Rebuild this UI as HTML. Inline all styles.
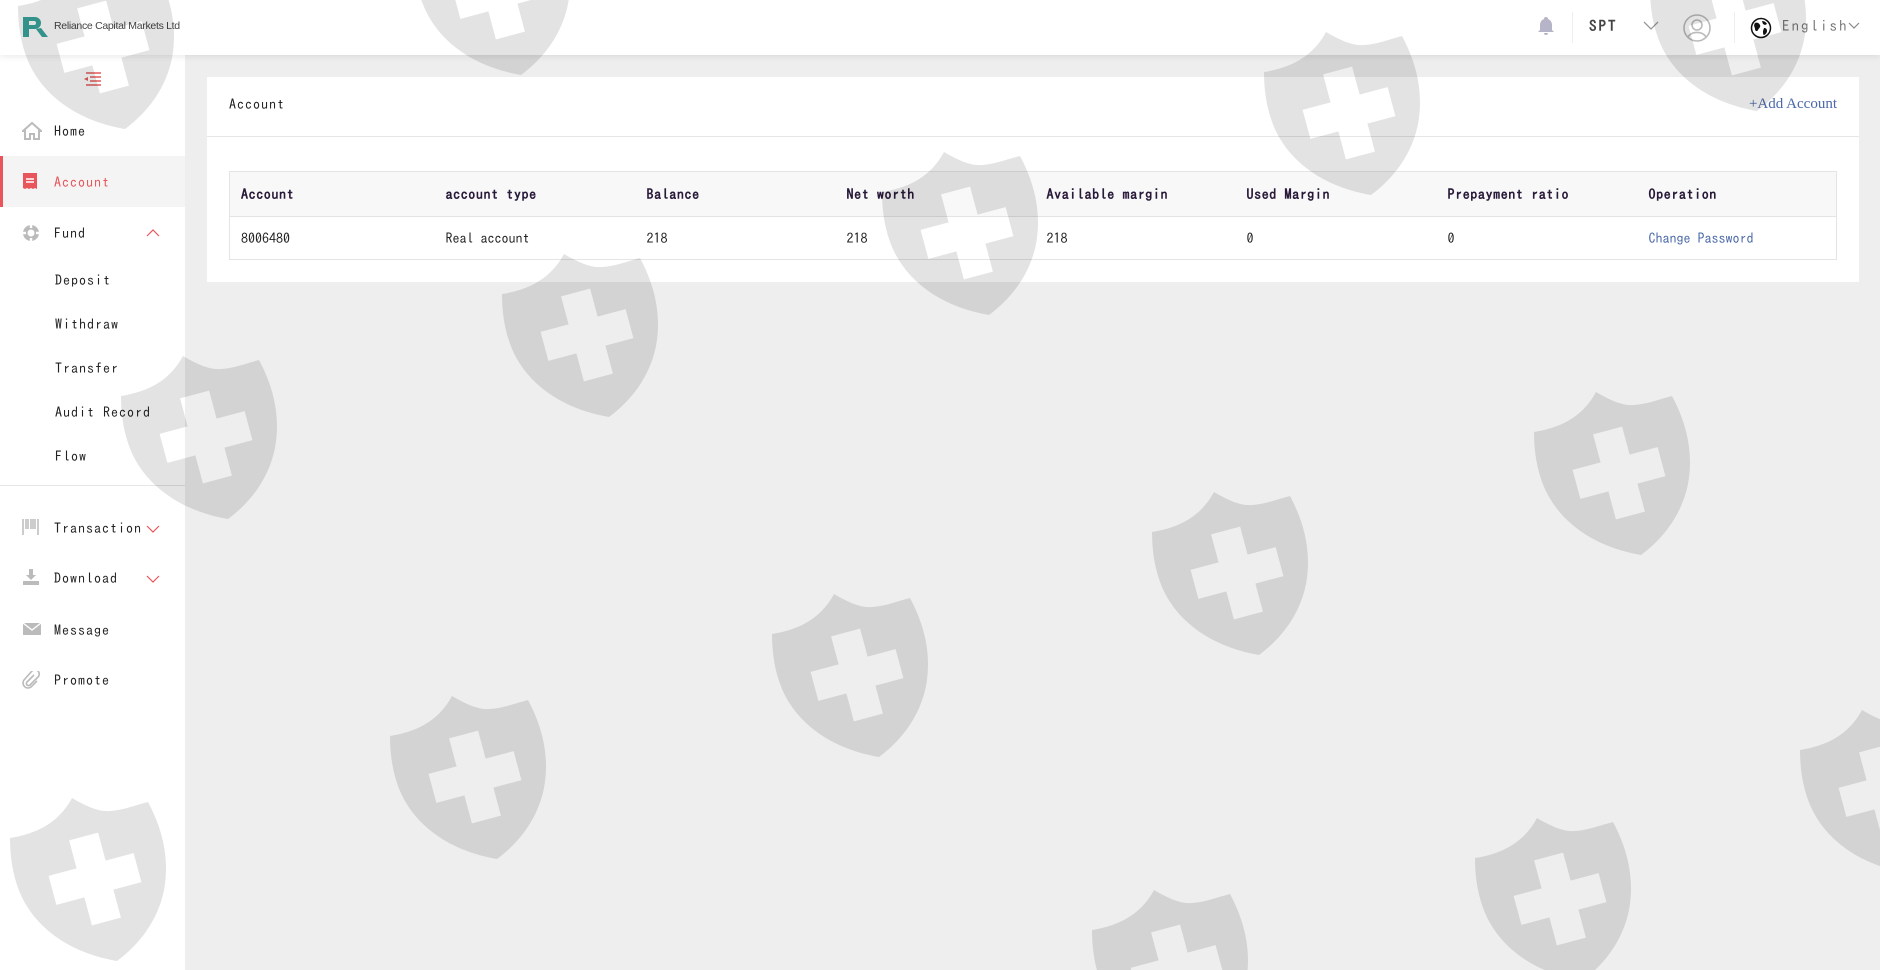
<!DOCTYPE html>
<html style="overflow:hidden;width:1880px;height:970px"><head><meta charset="utf-8"><style>
*{margin:0;padding:0;box-sizing:border-box}
body{width:1880px;height:970px;background:#eeeeee;font-family:"IPAGothic","Liberation Mono",monospace;font-size:14px;color:#222;position:relative;overflow:hidden}
.hdr{position:absolute;left:0;top:0;width:1880px;height:55px;background:#fff;box-shadow:0 2px 6px rgba(0,0,0,.08);z-index:2}
.side{position:absolute;left:0;top:55px;width:185px;height:915px;background:#fff;z-index:1}
.it{position:absolute;left:0;width:185px;height:20px;line-height:20px;letter-spacing:1px}
.it .t{position:absolute;left:54px}
.it svg{position:absolute;left:22px;top:1px}
.sub{position:absolute;left:55px;letter-spacing:1px;line-height:20px}
.card{position:absolute;left:207px;top:77px;width:1652px;height:205px;background:#fff}
.ch{height:60px;border-bottom:1px solid #e6e6e6;position:relative}
table{position:absolute;left:22px;top:94px;width:1608px;border-collapse:collapse;border:1px solid #e4e4e4}
th{background:#f8f8f8;height:45px;text-align:left;font-weight:bold;color:#2a1a3a;letter-spacing:.6px;padding-left:11px;border-bottom:1px solid #e4e4e4}
td{height:43px;padding-left:11px;font-size:14px}
.wm{position:absolute;left:0;top:0;z-index:5;pointer-events:none}
</style></head><body>
<div class="hdr">
 <svg style="position:absolute;left:22px;top:16px" width="30" height="22" viewBox="0 0 30 22"><path d="M1 1h12a6 6 0 0 1 0 12h-6v8H1z M7 5v4h5a2 2 0 0 0 0-4z" fill="#3aa59a" fill-rule="evenodd"/><path d="M14 13l6 8h6l-7-9z" fill="#3aa59a"/></svg>
 <div style="position:absolute;left:54px;top:20px;font-family:'Liberation Sans',sans-serif;font-size:10.5px;color:#444;letter-spacing:-.3px">Reliance Capital Markets Ltd</div>
 <svg style="position:absolute;left:1537px;top:16px" width="18" height="20" viewBox="0 0 18 20"><path d="M9 1a2 2 0 0 1 2 2 6 6 0 0 1 4 6v5l2 2H1l2-2V9a6 6 0 0 1 4-6 2 2 0 0 1 2-2zM7 17h4a2 2 0 0 1-4 0z" fill="#b6b4c8"/></svg>
 <div style="position:absolute;left:1572px;top:12px;width:1px;height:31px;background:#eee"></div>
 <div style="position:absolute;left:1589px;top:18px;font-weight:bold;letter-spacing:2px;color:#444;font-size:15px">SPT</div>
 <svg style="position:absolute;left:1643px;top:21px" width="16" height="10"><path d="M1 1l7 7 7-7" stroke="#999" fill="none" stroke-width="1.3"/></svg>
 <svg style="position:absolute;left:1682px;top:13px" width="30" height="30" viewBox="0 0 30 30"><circle cx="15" cy="15" r="13" stroke="#bbb" stroke-width="1.6" fill="none"/><circle cx="15" cy="12" r="5" stroke="#bbb" stroke-width="1.6" fill="none"/><path d="M6 24a10 8 0 0 1 18 0" stroke="#bbb" stroke-width="1.6" fill="none"/></svg>
 <div style="position:absolute;left:1734px;top:12px;width:1px;height:31px;background:#eee"></div>
 <svg style="position:absolute;left:1750px;top:17px" width="22" height="22" viewBox="0 0 22 22"><circle cx="11" cy="11" r="9.5" fill="#fff" stroke="#111" stroke-width="1.5"/><path d="M5 6c2-1 4 0 5 2s-1 3-2 5-3 1-3-1-2-3 0-6zM12 4c2 0 4 1 5 3l-2 1-2-1zM14 11c2 0 3 1 3 3s-2 4-3 4-1-3-1-4z" fill="#111"/></svg>
 <div style="position:absolute;left:1782px;top:18px;letter-spacing:2px;color:#777;font-size:15px">English</div>
 <svg style="position:absolute;left:1848px;top:22px" width="12" height="8"><path d="M1 1l5 5 5-5" stroke="#888" fill="none" stroke-width="1.2"/></svg>
</div>
<div class="side">
 <svg style="position:absolute;left:83px;top:17px" width="18" height="16" viewBox="0 0 18 16"><path d="M3 1h15M7 5h11M7 9h11M3 13h15" stroke="#e35b5b" stroke-width="1.6"/><path d="M5 5L1 7l4 2z" fill="#e35b5b"/></svg>
 <div class="it" style="top:66px"><svg width="20" height="18" viewBox="0 0 20 18"><path d="M10 1L1 9h2v8h5v-5h4v5h5V9h2z" fill="none" stroke="#bbb" stroke-width="2"/></svg><span class="t">Home</span></div>
 <div style="position:absolute;left:0;top:101px;width:185px;height:51px;background:#f4f4f4;border-left:3px solid #e8555a"></div>
 <div class="it" style="top:117px;color:#e8555a"><svg width="16" height="18" viewBox="0 0 16 18"><path d="M1 0h14v16l-2-1-2 1-2-1-2 1-2-1-2 1-2-1z" fill="#e8555a"/><path d="M4 6h8M4 9h8" stroke="#fff" stroke-width="1.6"/></svg><span class="t">Account</span></div>
 <div class="it" style="top:168px"><svg width="18" height="18" viewBox="0 0 18 18"><circle cx="9" cy="9" r="8" fill="#bbb"/><circle cx="9" cy="9" r="3.5" fill="#fff"/><path d="M9 1v3M9 14v3M1 9h3M14 9h3" stroke="#fff" stroke-width="2.5"/></svg><span class="t">Fund</span>
  <svg style="left:146px;top:6px" width="14" height="8"><path d="M1 7l6-6 6 6" stroke="#e8555a" fill="none" stroke-width="1.2"/></svg></div>
 <div class="sub" style="top:215px">Deposit</div>
 <div class="sub" style="top:259px">Withdraw</div>
 <div class="sub" style="top:303px">Transfer</div>
 <div class="sub" style="top:347px">Audit Record</div>
 <div class="sub" style="top:391px">Flow</div>
 <div style="position:absolute;left:0;top:430px;width:185px;height:1px;background:#e6e6e6"></div>
 <div class="it" style="top:463px"><svg width="18" height="16" viewBox="0 0 18 16"><path d="M1 0v16M4 0v10M6 0v10M9 0v10M11 0v10M13 0v10M16 0v16" stroke="#bbb" stroke-width="1.5"/></svg><span class="t">Transaction</span>
  <svg style="left:146px;top:7px" width="14" height="8"><path d="M1 1l6 6 6-6" stroke="#e8555a" fill="none" stroke-width="1.2"/></svg></div>
 <div class="it" style="top:513px"><svg width="18" height="16" viewBox="0 0 18 16"><path d="M7 0h4v6h3l-5 5-5-5h3zM1 12h16v4H1z" fill="#bbb"/></svg><span class="t">Download</span>
  <svg style="left:146px;top:7px" width="14" height="8"><path d="M1 1l6 6 6-6" stroke="#e8555a" fill="none" stroke-width="1.2"/></svg></div>
 <div class="it" style="top:565px"><svg width="20" height="16" viewBox="0 0 20 16"><path d="M1 2h18v12H1z" fill="#bbb"/><path d="M1 2l9 7 9-7" stroke="#fff" stroke-width="1.4" fill="none"/></svg><span class="t">Message</span></div>
 <div class="it" style="top:615px"><svg width="18" height="18" viewBox="0 0 18 18"><path d="M12 4L5 11a2 2 0 0 0 3 3l8-8a4 4 0 0 0-6-6L2 9a5 5 0 0 0 7 7l6-6" stroke="#bbb" stroke-width="1.6" fill="none"/></svg><span class="t">Promote</span></div>
</div>
<div class="card">
 <div class="ch"><span style="position:absolute;left:22px;top:20px;letter-spacing:1px">Account</span>
 <span style="position:absolute;right:22px;top:19px;font-family:'Liberation Serif',serif;font-size:15px;color:#4a68a8">+Add Account</span></div>
 <table><tr><th style="width:205px">Account</th><th style="width:201px">account type</th><th style="width:200px">Balance</th><th style="width:200px">Net worth</th><th style="width:200px">Available margin</th><th style="width:201px">Used Margin</th><th style="width:201px">Prepayment ratio</th><th>Operation</th></tr>
 <tr><td>8006480</td><td>Real account</td><td>218</td><td>218</td><td>218</td><td>0</td><td>0</td><td style="color:#4a68a8">Change Password</td></tr></table>
</div>
<svg class="wm" width="1880" height="970" viewBox="0 0 1880 970">
<defs><g id="s"><path fill-rule="evenodd" d="M0 40C25 36 48 26 62 0C76 8 88 14 100 13C114 12 126 7 138 4C152 30 160 60 154 92C148 122 130 146 107 163C60 155 25 130 10 95C3 78 0 60 0 40Z M59.1 42.4L88.1 34.6L95.6 62.6L123.6 55.1L131.4 84.1L103.4 91.6L110.9 119.6L81.9 127.4L74.4 99.4L46.4 106.9L38.6 77.9L66.6 70.4Z" fill="rgba(0,0,0,0.11)"/></g></defs>
<use href="#s" x="18" y="-34"/><use href="#s" x="414" y="-88"/><use href="#s" x="1264" y="32"/><use href="#s" x="882" y="152"/><use href="#s" x="502" y="254"/><use href="#s" x="121" y="356"/><use href="#s" x="1534" y="392"/><use href="#s" x="1152" y="492"/><use href="#s" x="772" y="594"/><use href="#s" x="390" y="696"/><use href="#s" x="10" y="798"/><use href="#s" x="1475" y="818"/><use href="#s" x="1092" y="890"/><use href="#s" x="1800" y="710"/><use href="#s" x="1650" y="-52"/>
</svg>
</body></html>
